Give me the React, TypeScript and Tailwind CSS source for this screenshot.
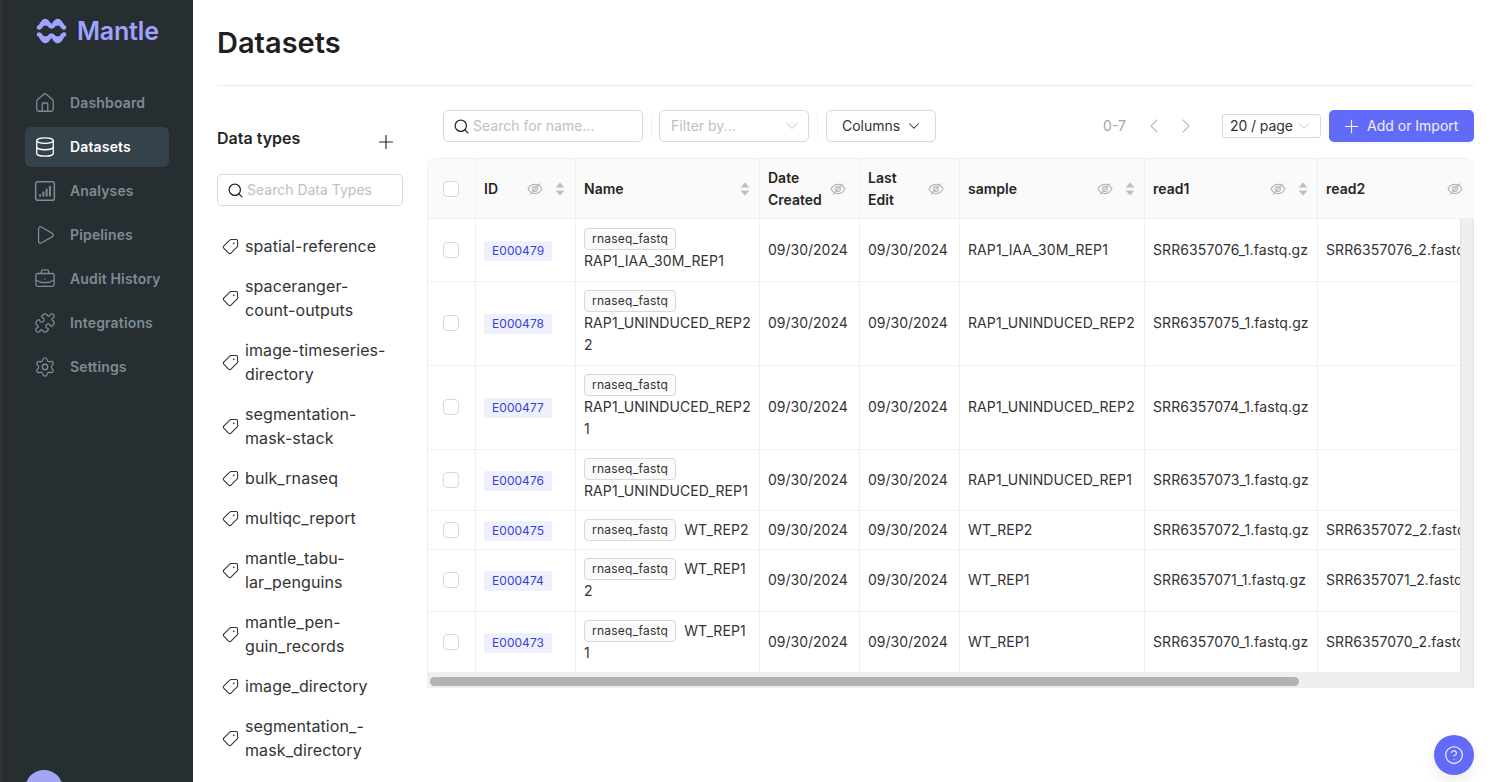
import {
  BriefcaseBusiness,
  ChevronDown,
  ChevronLeft,
  ChevronRight,
  CircleHelp,
  Database,
  House,
  Play,
  Plus,
  Puzzle,
  Search,
  Settings,
  Tag,
} from "lucide-react";

const ChartIcon = ({ className }: { className?: string }) => (
  <svg viewBox="0 0 20 20" fill="none" stroke="currentColor" strokeWidth="1.4" className={className}>
    <rect x="1.5" y="1.5" width="17" height="17" rx="2" />
    <path d="M5.5 15v-2M8.5 15v-4.5M11.5 15V8M14.5 15V5.5" strokeWidth="1.8" />
  </svg>
);

const navItems = [
  { label: "Dashboard", icon: House },
  { label: "Datasets", icon: Database, active: true },
  { label: "Analyses", icon: ChartIcon },
  { label: "Pipelines", icon: Play },
  { label: "Audit History", icon: BriefcaseBusiness },
  { label: "Integrations", icon: Puzzle },
  { label: "Settings", icon: Settings },
];

const dataTypes = [
  ["spatial-reference"],
  ["spaceranger-", "count-outputs"],
  ["image-timeseries-", "directory"],
  ["segmentation-", "mask-stack"],
  ["bulk_rnaseq"],
  ["multiqc_report"],
  ["mantle_tabu-", "lar_penguins"],
  ["mantle_pen-", "guin_records"],
  ["image_directory"],
  ["segmentation_-", "mask_directory"],
];

const rows = [
  { id: "E000479", h: "h-[62px]", inline: "", lines: ["RAP1_IAA_30M_REP1"], sample: "RAP1_IAA_30M_REP1", read1: "SRR6357076_1.fastq.gz", read2: "SRR6357076_2.fastq.gz" },
  { id: "E000478", h: "h-[84px]", inline: "", lines: ["RAP1_UNINDUCED_REP2", "2"], sample: "RAP1_UNINDUCED_REP2", read1: "SRR6357075_1.fastq.gz", read2: "" },
  { id: "E000477", h: "h-[84px]", inline: "", lines: ["RAP1_UNINDUCED_REP2", "1"], sample: "RAP1_UNINDUCED_REP2", read1: "SRR6357074_1.fastq.gz", read2: "" },
  { id: "E000476", h: "h-[61px]", inline: "", lines: ["RAP1_UNINDUCED_REP1"], sample: "RAP1_UNINDUCED_REP1", read1: "SRR6357073_1.fastq.gz", read2: "" },
  { id: "E000475", h: "h-[39px]", inline: "WT_REP2", lines: [], sample: "WT_REP2", read1: "SRR6357072_1.fastq.gz", read2: "SRR6357072_2.fastq.gz" },
  { id: "E000474", h: "h-[62px]", inline: "WT_REP1", lines: ["2"], sample: "WT_REP1", read1: "SRR6357071_1.fastq.gz", read2: "SRR6357071_2.fastq.gz" },
  { id: "E000473", h: "h-[61px]", inline: "WT_REP1", lines: ["1"], sample: "WT_REP1", read1: "SRR6357070_1.fastq.gz", read2: "SRR6357070_2.fastq.gz" },
];

function EyeSlash() {
  return (
    <svg viewBox="0 0 16 16" fill="none" stroke="#b3b3b3" strokeWidth="1.1" className="w-4 h-4 shrink-0">
      <path d="M1 8C3 4.4 5.4 3.4 8 3.4S13 4.4 15 8C13 11.6 10.6 12.6 8 12.6S3 11.6 1 8Z" />
      <circle cx="8" cy="8" r="2.4" />
      <path d="M3 13.5L13 2.5" />
    </svg>
  );
}

function SortCaret() {
  return (
    <svg viewBox="0 0 10 14" fill="#bfbfbf" className="w-[10px] h-[14px] shrink-0">
      <path d="M5 0.5L9.5 5.5H0.5Z" />
      <path d="M5 13.5L0.5 8.5H9.5Z" />
    </svg>
  );
}

function HeaderCell({ title, eye, sort, width, pr }: { title: string[]; eye?: boolean; sort?: boolean; width: string; pr: string }) {
  return (
    <div className={`${width} ${pr} shrink-0 h-full flex items-center justify-between pl-2 border-r border-[#f0f0f0]`}>
      <span className="font-semibold leading-[22px] text-[#262626]">
        {title.map(t => (
          <span key={t} className="block">{t}</span>
        ))}
      </span>
      <span className="flex items-center gap-3">
        {eye && <EyeSlash />}
        {sort && <SortCaret />}
      </span>
    </div>
  );
}

function Checkbox() {
  return <span className="block w-4 h-4 ml-[15px] rounded-[4px] border border-[#d9d9d9] bg-white" />;
}

export default function App() {
  return (
    <div className="h-[782px] w-full overflow-hidden flex bg-white text-[#262626] font-['Inter',sans-serif]">
      {/* Sidebar */}
      <aside className="relative w-[193px] shrink-0 h-full overflow-hidden bg-[#262e32] border-l-2 border-[#333333]">
        <div className="h-[83px] pl-[34px] pt-[16px] flex items-start gap-[10px]">
          <svg viewBox="0 0 31 26" fill="none" stroke="#a0a2ff" strokeWidth="4.6" strokeLinejoin="round" strokeLinecap="round" className="w-[31px] h-[26px] mt-[2px] shrink-0">
            <path d="M3 9.5C5 9.5 6.5 3 9.2 3S13 8.5 15.5 8.5S19 3 21.8 3S26 9.5 28 9.5" />
            <path d="M7.5 5.5H11M20 5.5H23.5" />
            <path d="M3 16.5C5 16.5 6.5 23 9.2 23S13 17.5 15.5 17.5S19 23 21.8 23S26 16.5 28 16.5" />
            <path d="M7.5 20.5H11M20 20.5H23.5" />
          </svg>
          <span className="text-[25px] leading-[30px] font-semibold text-[#a0a2ff] tracking-[-0.2px]">Mantle</span>
        </div>
        <nav className="flex flex-col gap-1 ml-[23px] w-[144px]">
          {navItems.map(item => {
            const Icon = item.icon;
            return (
              <div
                key={item.label}
                className={`h-10 flex items-center gap-[14px] pl-[9px] rounded-md text-sm font-semibold tracking-[0.15px] ${item.active ? "bg-[#36424a] text-white" : "text-[#7d8b94]"}`}
              >
                <Icon className="w-[22px] h-[22px] shrink-0" strokeWidth={1.4} />
                <span>{item.label}</span>
              </div>
            );
          })}
        </nav>
        <div className="absolute left-[23px] -bottom-[26px] w-[38px] h-[38px] rounded-full bg-[#a3a6f5]" />
        <div className="absolute -left-[2px] top-[612px] w-[2px] h-[5px] bg-[#ff4d4f]" />
      </aside>

      {/* Main */}
      <main className="flex-1 min-w-0 px-6">
        <div className="h-[86px] border-b border-[#ececec] flex items-start pt-[24px]">
          <h1 className="text-[29px] leading-[38px] font-semibold text-[#1f1f1f]">Datasets</h1>
        </div>

        <div className="flex gap-6 pt-6">
          {/* Data types */}
          <section className="w-[186px] shrink-0 pt-4">
            <div className="flex items-start justify-between h-6">
              <span className="text-base font-semibold text-[#262626]">Data types</span>
              <Plus className="w-[22px] h-[22px] mt-[5px] mr-[6px] text-[#262626]" strokeWidth={1.3} />
            </div>
            <div className="mt-6 h-8 rounded-[5px] border border-[#d9d9d9] flex items-center pl-[9px] gap-[3px]">
              <Search className="w-[17px] h-[17px] text-[#262626]" strokeWidth={1.8} />
              <span className="text-sm text-[#bfbfbf]">Search Data Types</span>
            </div>
            <ul className="mt-7 flex flex-col gap-4">
              {dataTypes.map(lines => (
                <li key={lines[0]} className="flex items-center gap-[6px] pl-[5px] text-base leading-6 text-[#333333] tracking-[0.1px]">
                  <Tag className="w-[17px] h-[17px] rotate-90 shrink-0" strokeWidth={1.5} />
                  <span>
                    {lines.map(l => (
                      <span key={l} className="block">{l}</span>
                    ))}
                  </span>
                </li>
              ))}
            </ul>
          </section>

          {/* Table side */}
          <section className="w-[1047px] shrink-0">
            <div className="h-8 flex items-center pl-4 text-sm">
              <div className="w-[200px] h-8 rounded-[5px] border border-[#d9d9d9] flex items-center pl-[9px] gap-[3px]">
                <Search className="w-[17px] h-[17px] text-[#262626]" strokeWidth={1.8} />
                <span className="text-[#bfbfbf]">Search for name...</span>
              </div>
              <div className="w-px h-6 bg-[#f0f0f0] ml-2 mr-[7px]" />
              <div className="w-[150px] h-8 rounded-[5px] border border-[#d9d9d9] flex items-center justify-between pl-[11px] pr-[6px]">
                <span className="text-[#bfbfbf]">Filter by...</span>
                <ChevronDown className="w-5 h-5 text-[#bfbfbf]" strokeWidth={1.2} />
              </div>
              <div className="w-px h-6 bg-[#f0f0f0] ml-2 mr-2" />
              <div className="w-[110px] h-8 rounded-[5px] border border-[#d9d9d9] flex items-center pl-[15px] gap-[5px] shadow-[0_2px_0_rgba(0,0,0,0.02)] text-[#333333]">
                <span>Columns</span>
                <ChevronDown className="w-[18px] h-[18px]" strokeWidth={1.4} />
              </div>
              <span className="ml-auto text-[#a6a6a6]">0-7</span>
              <ChevronLeft className="ml-4 w-6 h-6 text-[#bfbfbf]" strokeWidth={1.2} />
              <ChevronRight className="ml-2 w-6 h-6 text-[#bfbfbf]" strokeWidth={1.2} />
              <div className="ml-6 w-[99px] h-6 rounded-[3px] border border-[#d9d9d9] flex items-center justify-between pl-[7px] pr-[7px] text-[#333333]">
                <span className="tracking-[-0.1px]">20 / page</span>
                <ChevronDown className="w-[18px] h-[18px] text-[#bfbfbf]" strokeWidth={1.2} />
              </div>
              <div className="ml-2 w-[145px] h-8 rounded-[5px] bg-[#616bf7] text-white/90 flex items-center pl-3 gap-[5px] shadow-[0_2px_0_rgba(5,145,255,0.06)]">
                <Plus className="w-[21px] h-[21px]" strokeWidth={1.3} />
                <span>Add or Import</span>
              </div>
            </div>

            <div className="mt-4 text-sm rounded-t-lg overflow-hidden">
              {/* Header */}
              <div className="flex h-[61px] bg-[#fafafa] border-t border-l border-[#f0f0f0] border-b rounded-t-lg overflow-hidden">
                <div className="w-[48px] shrink-0 h-full flex items-center border-r border-[#f0f0f0]">
                  <Checkbox />
                </div>
                <HeaderCell title={["ID"]} eye sort width="w-[100px]" pr="pr-[10px]" />
                <HeaderCell title={["Name"]} sort width="w-[184px]" pr="pr-[9px]" />
                <HeaderCell title={["Date", "Created"]} eye width="w-[100px]" pr="pr-[13px]" />
                <HeaderCell title={["Last", "Edit"]} eye width="w-[100px]" pr="pr-[15px]" />
                <HeaderCell title={["sample"]} eye sort width="w-[185px]" pr="pr-[9px]" />
                <HeaderCell title={["read1"]} eye sort width="w-[173px]" pr="pr-[9px]" />
                <div className="flex-1 h-full flex items-center justify-between pl-2 pr-[11px]">
                  <span className="font-semibold text-[#262626]">read2</span>
                  <EyeSlash />
                </div>
              </div>

              {/* Body */}
              <div className="flex">
                <div className="flex-1 min-w-0 overflow-hidden">
                  <table className="table-fixed border-collapse w-[1033px] text-[#333333]">
                    <colgroup>
                      <col className="w-[48px]" />
                      <col className="w-[100px]" />
                      <col className="w-[184px]" />
                      <col className="w-[100px]" />
                      <col className="w-[100px]" />
                      <col className="w-[185px]" />
                      <col className="w-[173px]" />
                      <col className="w-[143px]" />
                    </colgroup>
                    <tbody>
                      {rows.map(row => (
                        <tr key={row.id} className={`${row.h} border-b border-[#f0f0f0]`}>
                          <td className="border-x border-[#f0f0f0]">
                            <Checkbox />
                          </td>
                          <td className="border-r border-[#f0f0f0] pl-2">
                            <span className="inline-block mt-[2px] h-5 leading-5 px-2 rounded-[2px] bg-[#eef0fe] text-[#3b3fd8] text-xs tracking-[0.05px]">{row.id}</span>
                          </td>
                          <td className="border-r border-[#f0f0f0] pl-2 pr-1 leading-[22px] tracking-[0.1px]">
                            <div className="flex items-center gap-2">
                              <span className="inline-block h-[22px] leading-[20px] px-[7px] rounded-[4px] border border-[#d9d9d9] bg-[#fafafa] text-xs tracking-[0.25px]">rnaseq_fastq</span>
                              {row.inline && <span>{row.inline}</span>}
                            </div>
                            {row.lines.map(l => (
                              <div key={l}>{l}</div>
                            ))}
                          </td>
                          <td className="border-r border-[#f0f0f0] pl-2">09/30/2024</td>
                          <td className="border-r border-[#f0f0f0] pl-2">09/30/2024</td>
                          <td className="border-r border-[#f0f0f0] pl-2 tracking-[0.1px]">{row.sample}</td>
                          <td className="border-r border-[#f0f0f0] pl-2 whitespace-nowrap overflow-hidden tracking-[0.1px]">{row.read1}</td>
                          <td className="pl-2 whitespace-nowrap overflow-hidden tracking-[0.1px]">{row.read2}</td>
                        </tr>
                      ))}
                    </tbody>
                  </table>
                </div>
                <div className="w-[14px] shrink-0 bg-[#efefef] border-l border-r border-[#e3e3e3]" />
              </div>

              {/* Horizontal scrollbar */}
              <div className="h-[15px] bg-[#efefef] border-r border-[#e3e3e3] pt-[4px] pl-[3px]">
                <div className="w-[869px] h-[9px] rounded-full bg-[#b3b3b3]" />
              </div>
            </div>
          </section>
        </div>
      </main>

      <div className="fixed right-[24px] top-[735px] w-10 h-10 rounded-full bg-[#616bf7] flex items-center justify-center shadow-[0_6px_16px_rgba(0,0,0,0.08)]">
        <CircleHelp className="w-5 h-5 text-white" strokeWidth={1.3} />
      </div>
    </div>
  );
}
